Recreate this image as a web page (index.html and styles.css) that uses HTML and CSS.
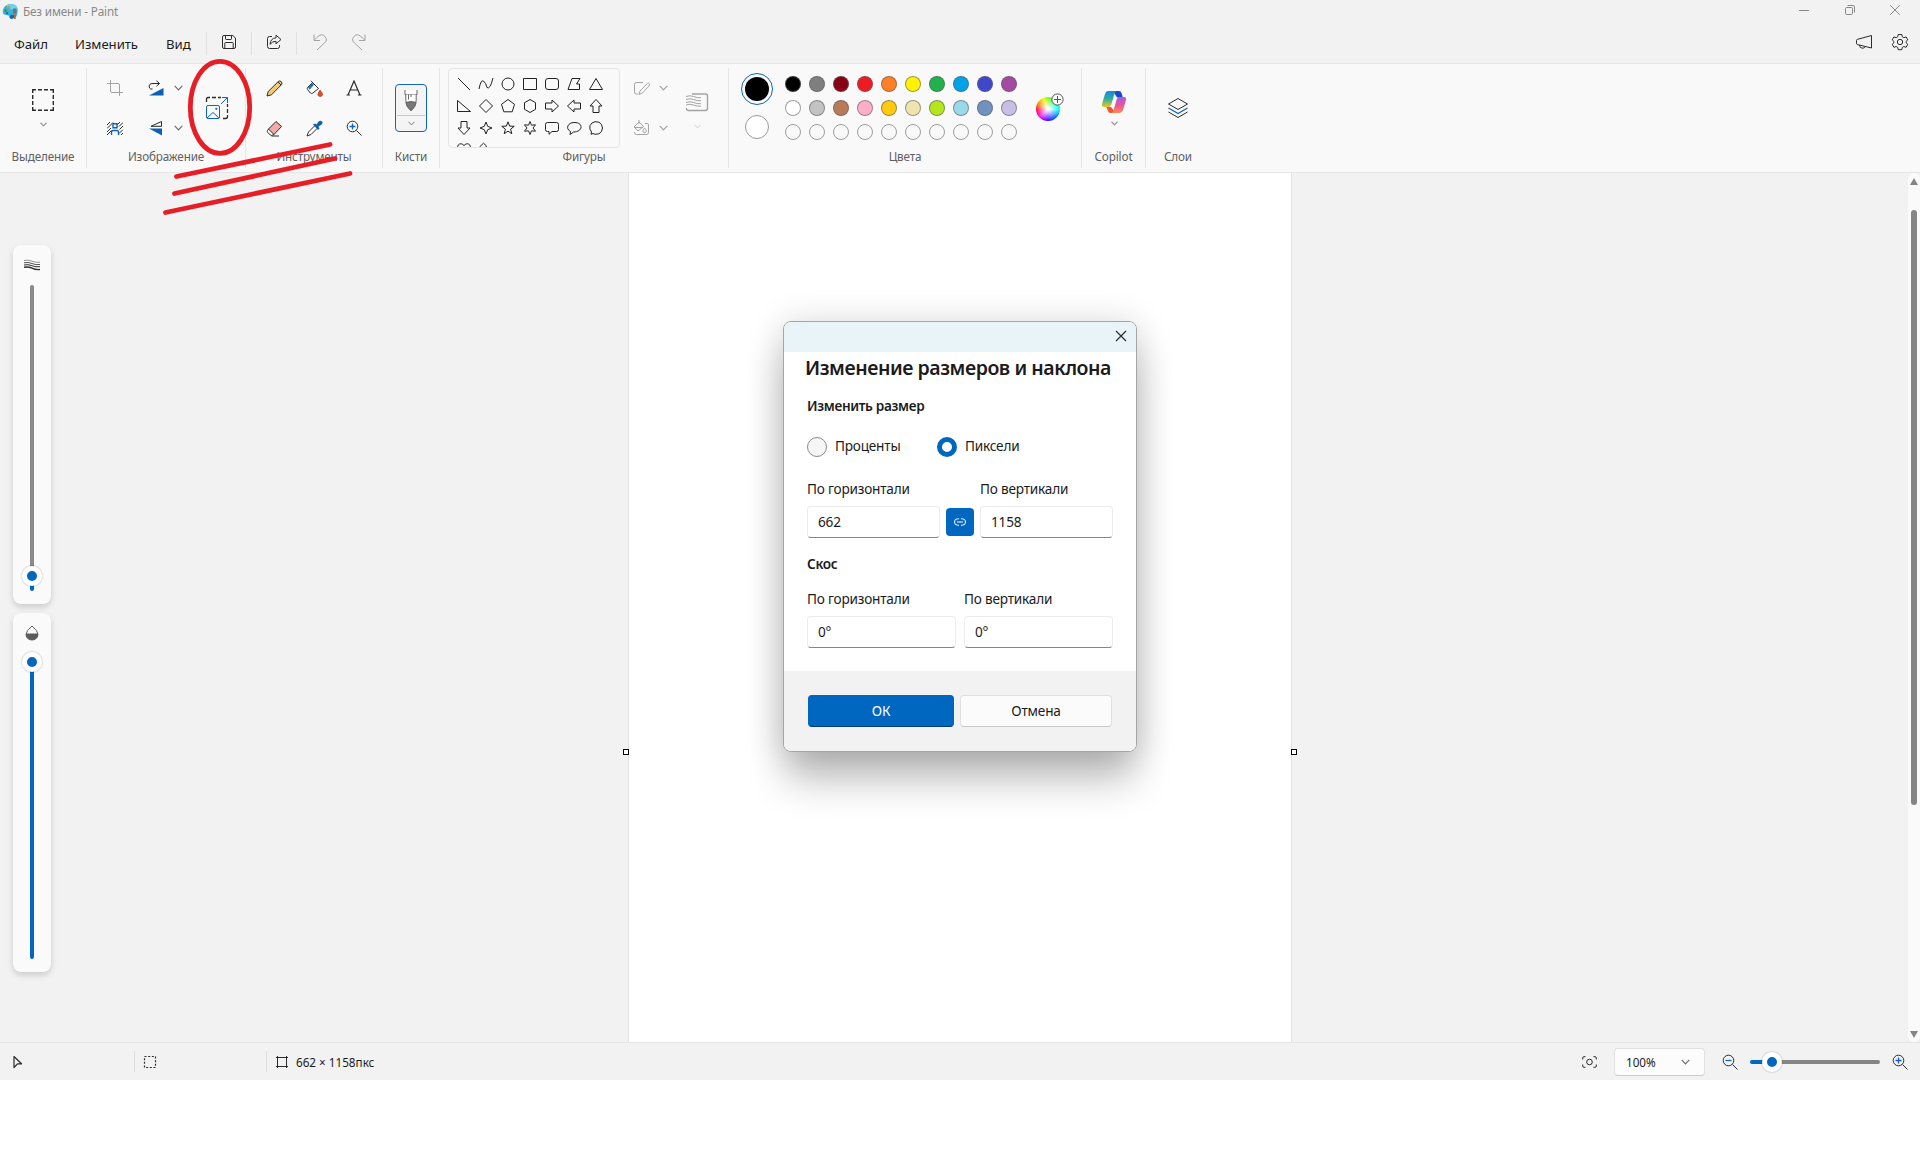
FILE: index.html
```html
<!DOCTYPE html>
<html lang="ru">
  <head>
    <meta charset="utf-8">
    <title>Без имени - Paint</title>
    <link rel="stylesheet" href="styles.css">
  </head>
  <body>
    <div class="app">
      <div class="titlebar">
        <svg class="logo" width="17" height="17" viewBox="0 0 17 17">
          <path d="M8.500 1C13 .8 15.500 3.500 15.800 7L15 12C14 15 11 16 8.500 15.600C7 15.200 7.600 13.500 6.500 12.600C4 11 1 13 .8 9C.6 4.500 4 1.200 8.500 1z" fill="#35b4e0"/>
          <path d="M8.500 1C13 .8 15.500 3.500 15.800 7L9 6.500L4 2.600C5.400 1.600 6.800 1.100 8.500 1z" fill="#6bd3ee"/>
          <path d="M9 11.500L14 12.800C12.500 15 10.500 16 8.500 15.600C7.200 15 7.600 13.500 9 11.500z" fill="#1469b8"/>
          <circle cx="3.600" cy="7.500" r="1.500" fill="#3e9c49"/>
          <circle cx="6.600" cy="4.200" r="1.400" fill="#e8883b"/>
          <circle cx="5" cy="10.200" r="1.200" fill="#1d6cb5"/>
          <path d="M11 5.500h3.500v5H11z" fill="#6d7378"/>
          <path d="M12 10.500h1.700v5.500H12z" fill="#a9743d"/>
        </svg>
        <span class="title">Без имени - Paint</span>
        <div class="window-buttons">
          <svg width="10" height="10"><path d="M0 5.500h10"/></svg>
          <svg width="10" height="10"><rect x=".5" y="2.500" width="7" height="7" rx="1.200"/><path d="M2.500 .5h5.500q1.500 0 1.500 1.500v5.500"/></svg>
          <svg width="10" height="10"><path d="M.2 .2l9.600 9.600M9.800 .2L.2 9.800"/></svg>
        </div>
      </div>

      <div class="menubar">
        <a class="file" href="#">Файл</a>
        <a class="edit" href="#">Изменить</a>
        <a class="view" href="#">Вид</a>
        <div class="quick save">
          <svg width="16" height="16" viewBox="0 0 16 16"><path d="M3 1.500h8.800L14.500 4v9q0 1.500-1.500 1.500H3q-1.500 0-1.500-1.500V3q0-1.500 1.500-1.500zM4.500 1.500v3.300q0 .7.700.7h4.600q.7 0 .7-.7V1.500M3.800 14.500V9.200q0-.7.700-.7h7q.7 0 .7.700v5.300"/></svg>
        </div>
        <div class="quick share">
          <svg width="16" height="16" viewBox="0 0 16 16"><path d="M6 2.500H3.500q-2 0-2 2v8q0 2 2 2h8q2 0 2-2v-1.500M10 1.200l5 4.300l-5 4.300V7.300q-3.500-.2-6 3q.5-6 6-6.500z"/></svg>
        </div>
        <div class="history">
          <svg width="16" height="18" viewBox="0 0 16 18"><path d="M2 1.500v6h6M2.300 7L6 3.500Q10 0 13 3.500T12.500 10L5 17"/></svg>
          <svg width="16" height="18" viewBox="0 0 16 18"><path d="M14 1.500v6H8M13.700 7L10 3.500Q6 0 3 3.500T3.500 10L11 17"/></svg>
        </div>
        <div class="menu-right">
          <svg width="18" height="16" viewBox="0 0 18 16"><path d="M16.500 1.500v12.500L2.300 10.500Q1.500 10.300 1.500 9.500V6.500Q1.500 5.600 2.300 5.400zM4.500 11q.3 3 2.700 3.200T10.300 12.500"/></svg>
          <svg width="18" height="18" viewBox="0 0 18 18"><path d="M7.200 1.500h3.600l.5 2.300 1.500.9 2.300-.8 1.700 3-1.700 1.500v1.400l1.700 1.500-1.700 3-2.300-.8-1.500.9-.5 2.300H7.200l-.5-2.300-1.500-.9-2.300.8-1.700-3 1.700-1.500V8.400L1.200 6.900l1.700-3 2.300.8 1.500-.9z" stroke-linejoin="round"/><circle cx="9" cy="9" r="2.700"/></svg>
        </div>
      </div>

      <div class="ribbon">
        <div class="group selection">
          <div class="tools">
            <svg width="22" height="22" viewBox="0 0 22 22"><path d="M.7 4V.7H4M18 .7h3.300V4M21.300 18v3.300H18M4 21.300H.7V18M6 .7h4M12 .7h4M6 21.300h4M12 21.300h4M.7 6v4M.7 12v4M21.300 6v4M21.300 12v4" stroke-width="1.400"/></svg>
            <svg class="chevron small" width="7" height="5" viewBox="0 0 9 6"><path d="M.7 .8l3.800 4 3.800-4"/></svg>
          </div>
          <span class="label">Выделение</span>
        </div>

        <div class="group image">
          <div class="tools">
            <svg class="off" width="16" height="16" viewBox="0 0 16 16"><path d="M3.500 0v11q0 1.500 1.500 1.500h11M0 3.500h11q1.500 0 1.500 1.500v11"/></svg>
            <svg width="16" height="16" viewBox="0 0 16 16"><path d="M15.500 8v7.500H1z" fill="#0f5fb5" stroke="none"/><path d="M1.500 8Q0 3.500 5 3.500h6.500M8.500 .8l3 2.700-3 2.700M1.500 8q.8 1.500 3 1"/></svg>
            <svg class="chevron" width="9" height="6" viewBox="0 0 9 6"><path d="M.7 .8l3.800 4 3.800-4"/></svg>
            <svg class="resize" width="24" height="24" viewBox="0 0 24 24"><path d="M1.500 6V3q0-1.500 1.500-1.500h2M7 1.500h4M13 1.500h3M22.500 8v3M22.500 13v4M22.500 19v1.500q0 2-2 2H18" stroke-width="1.300"/><path class="blue" d="M3 9.500h10q1.500 0 1.500 1.500v10q0 1.500-1.500 1.500H3q-1.500 0-1.500-1.500V11q0-1.500 1.500-1.500zM2 22l6-5.500 6 5.500M16 8l6.500-6.500M17 1.500h5.500V7"/><circle class="dot" cx="11.300" cy="12.800" r="1.100"/></svg>
            <svg width="16" height="13" viewBox="0 0 16 13"><path d="M0 3l3-3M0 6.500L6 .5M0 10l4-4M0 13L4.500 8.500M10 3l3-3M12 4.500L16 .5M12.500 7.500L16 4M12 11.500l4-4M13 14l3-3"/><path class="blue" d="M6 1.700h4v4H6zM4.500 13v-3q0-1.500 1.500-1.500h4q1.500 0 1.500 1.500v3" stroke-width="1.400"/></svg>
            <svg width="16" height="16" viewBox="0 0 16 16"><path d="M13.500 1.500v4.800H3z"/><path d="M14 8.500v7L1 8.500z" fill="#0f5fb5" stroke="none"/></svg>
            <svg class="chevron" width="9" height="6" viewBox="0 0 9 6"><path d="M.7 .8l3.800 4 3.800-4"/></svg>
          </div>
          <span class="label">Изображение</span>
        </div>

        <div class="group instruments">
          <div class="tools">
            <svg width="17" height="17" viewBox="0 0 17 17"><path d="M1 16l1.200-4.500L12.300 1.500Q14 .3 15.300 1.700T15.500 4.700L5.500 14.800z" fill="#f0cb73"/><path d="M12 2l3 3" /></svg>
            <svg width="17" height="17" viewBox="0 0 17 17"><path d="M6.500 2.500L12.500 8.500L6.500 13.300Q5.500 14 4.500 13L1.500 9.500Q.8 8.500 1.600 7.500z" fill="#fff"/><path d="M2 7.500L6 3l2 1.800-4.500 5z" fill="#1673c8" stroke="none"/><path d="M5 .8l3.500 4"/><path d="M14 10q2.500 3 2.500 4.300a2.300 2.300 0 0 1-4.600 0Q11.900 13 14 10z" fill="#d8512b" stroke="#a33416" stroke-width=".6"/></svg>
            <svg width="16" height="16" viewBox="0 0 16 16"><path d="M2 15L8 1l6 14M4.200 10h7.600M.5 15h3.500M12 15h3.500" stroke-width="1.200"/></svg>
            <svg width="17" height="17" viewBox="0 0 17 17"><path d="M10 1.500L15.500 6.500L8 14.500L2.500 9z" fill="#f6a9a9"/><path d="M2.500 9L1.500 10.500q-.6 1 .3 2l2.500 2.500q1.500 1 2.500 0L8 14.500M5.500 16h7.500" fill="none"/></svg>
            <svg width="17" height="17" viewBox="0 0 17 17"><path d="M8.500 6L2.500 12L1 16l4-1.500L11 8.500" fill="#fff"/><path d="M7 4.500L9 3.500L10.500 4.500L12.500 1.500Q14.500 0 16 1.500T15 5L12.500 6.500L13.500 8.500L12 10z" fill="#0f5fb5" stroke="none"/></svg>
            <svg width="16" height="16" viewBox="0 0 16 16"><circle cx="6.500" cy="6.500" r="5.300"/><path d="M10.500 10.500l5 5"/><path class="blue" d="M6.500 3.500v6M3.500 6.500h6" stroke-width="1.300"/></svg>
          </div>
          <span class="label">Инструменты</span>
        </div>

        <div class="group brushes">
          <div class="tools">
            <div class="brush">
              <svg width="14" height="24" viewBox="0 0 14 24"><path d="M1 1v4.500h12V1" fill="#fff"/><path d="M1.800 5.500v6Q2 17 7 21.500Q12 17 12.200 11.500v-6" fill="#fff"/><path d="M1.800 13.500Q2.500 18 7 21.800Q11.500 18 12.200 13.500Q7 11.500 1.800 13.500z" fill="#777"/><path d="M4.500 5.500v5M7 5.500v2.500"/></svg>
              <div class="drop"><svg class="chevron" width="7" height="5" viewBox="0 0 9 6"><path d="M.7 .8l3.800 4 3.800-4"/></svg></div>
            </div>
          </div>
          <span class="label">Кисти</span>
        </div>

        <div class="group shapes">
          <div class="tools">
            <div class="gallery">
              <svg viewBox="0 0 16 16"><path d="M2 2l12 12"/></svg>
              <svg viewBox="0 0 16 16"><path d="M1 13Q3 3 5.500 5T9 11.500Q12 14 15 2"/></svg>
              <svg viewBox="0 0 16 16"><circle cx="8" cy="8" r="6"/></svg>
              <svg viewBox="0 0 16 16"><path d="M1.500 2.500h13v11h-13z"/></svg>
              <svg viewBox="0 0 16 16"><rect x="1.500" y="2.500" width="13" height="11" rx="2.500"/></svg>
              <svg viewBox="0 0 16 16"><path d="M6 2.500h8L10.500 8h3v5.500H2z"/></svg>
              <svg viewBox="0 0 16 16"><path d="M8 2.500l6.500 11h-13z"/></svg>
              <svg viewBox="0 0 16 16"><path d="M1.500 2.500l13 11h-13z"/></svg>
              <svg viewBox="0 0 16 16"><path d="M8 1.500L14.500 8 8 14.500 1.500 8z"/></svg>
              <svg viewBox="0 0 16 16"><path d="M8 1.500l6.500 4.800-2.300 7.500H3.800L1.500 6.300z"/></svg>
              <svg viewBox="0 0 16 16"><path d="M8 1.500l5.500 3.200v6.600L8 14.500l-5.500-3.200V4.700z"/></svg>
              <svg viewBox="0 0 16 16"><path d="M1.500 5h6.500V2l6.500 6L8 14v-3H1.500z"/></svg>
              <svg viewBox="0 0 16 16"><path d="M14.500 5H8V2L1.500 8 8 14v-3h6.500z"/></svg>
              <svg viewBox="0 0 16 16"><path d="M5 14.500V8H2l6-6.500L14 8h-3v6.500z"/></svg>
              <svg viewBox="0 0 16 16"><path d="M5 1.500V8H2l6 6.500L14 8h-3V1.500z"/></svg>
              <svg viewBox="0 0 16 16"><path d="M8 2l1.700 4.300L14 8 9.700 9.700 8 14 6.300 9.700 2 8l4.300-1.700z"/></svg>
              <svg viewBox="0 0 16 16"><path d="M8 1.800l1.600 4.300 4.600.2-3.600 2.900 1.200 4.500L8 11.200l-3.800 2.500 1.200-4.500L1.800 6.300l4.600-.2z"/></svg>
              <svg viewBox="0 0 16 16"><path d="M8 1.500l1.500 3.700 4-.4L11 8l2.500 3.200-4-.4L8 14.500l-1.500-3.700-4 .4L5 8 2.500 4.800l4 .4z"/></svg>
              <svg viewBox="0 0 16 16"><path d="M3.500 2.500h9q2 0 2 2v5q0 2-2 2H8L5 14.300V11.500H3.500q-2 0-2-2v-5q0-2 2-2z"/></svg>
              <svg viewBox="0 0 16 16"><path d="M4.500 11.500C-1 8.500 2 2.500 8 2.500S15 5 15 7.300 12 12 7.500 12L4 14.500z"/></svg>
              <svg viewBox="0 0 16 16"><path d="M3 14.300l.5-2.300Q1 9 2 5.500L4 3l3-1.300 4 .5 2.500 2.300 1 3.500-1 3.500-2.500 2.300-4 .5-2-.8z"/></svg>
              <svg viewBox="0 0 16 16"><path d="M8 14L2 8C0 2 5 0 8 3.500C11 0 16 2 14 8z"/></svg>
              <svg viewBox="0 0 16 16"><path d="M1.500 5L5.500 1.200 8.500 4 7.500 5.500l5 3v4L2 9z"/></svg>
            </div>
            <div class="shape-options off">
              <svg width="17" height="15" viewBox="0 0 17 15"><path d="M10 1.500H3.500q-2 0-2 2V11q0 2 2 2H5M6 13.500l1-3.500 7.500-7.500q1.300-1 2 .3t-.3 2L9.500 12z"/></svg>
              <svg class="chevron" width="9" height="6" viewBox="0 0 9 6"><path d="M.7 .8l3.800 4 3.800-4"/></svg>
              <svg width="17" height="16" viewBox="0 0 17 16"><path d="M12 3.500h2q1.500 0 1.500 1.500v7.500q0 2-2 2H3.500q-2 0-2-2V12M6 2L1 7l4 4 5.500-4.500zM6 0v4M1.500 7.500h8M11.500 8q1.800 2 1.800 3a1.600 1.600 0 0 1-3.400 0q0-1 1.600-3z"/></svg>
              <svg class="chevron" width="9" height="6" viewBox="0 0 9 6"><path d="M.7 .8l3.800 4 3.800-4"/></svg>
            </div>
            <div class="size off">
              <svg width="24" height="19" viewBox="0 0 24 19"><path d="M7 1h13.500q2 0 2 2v12.500q0 2-2 2H3.500q-2 0-2-2V15" stroke-width="1.400"/><path d="M1 3.500q4-1.500 7.500 0t7.500 1.200M1 6.500q4-1.500 7.500 0t7.500 1.200M1 9.500q4-1.500 7.500 0t7.500 1.200M1 12q4-1.500 7.500 0t7.500 1.200"/></svg>
              <svg class="chevron faint" width="7" height="5" viewBox="0 0 9 6"><path d="M.7 .8l3.800 4 3.800-4"/></svg>
            </div>
          </div>
          <span class="label">Фигуры</span>
        </div>

        <div class="group colors">
          <div class="tools">
            <div class="current">
              <span class="primary"></span>
              <span class="secondary"></span>
            </div>
            <div class="palette">
              <i class="black"></i><i class="gray"></i><i class="dark-red"></i><i class="red"></i><i class="orange"></i><i class="yellow"></i><i class="green"></i><i class="turquoise"></i><i class="indigo"></i><i class="purple"></i>
              <i class="white"></i><i class="light-gray"></i><i class="brown"></i><i class="rose"></i><i class="gold"></i><i class="cream"></i><i class="lime"></i><i class="sky"></i><i class="blue-gray"></i><i class="lavender"></i>
              <i></i><i></i><i></i><i></i><i></i><i></i><i></i><i></i><i></i><i></i>
            </div>
            <div class="wheel"><svg class="plus" width="13" height="13" viewBox="0 0 13 13"><circle cx="6.500" cy="6.500" r="5.600" fill="#fafafa"/><path d="M6.500 3v7M3 6.500h7"/></svg></div>
          </div>
          <span class="label">Цвета</span>
        </div>

        <div class="group copilot">
          <div class="tools">
            <svg width="26" height="24" viewBox="0 0 26 24">
              <defs>
                <linearGradient id="cp1" x1="0" y1="0" x2="0" y2="1"><stop offset="0" stop-color="#1688dd"/><stop offset=".5" stop-color="#2fae9c"/><stop offset="1" stop-color="#f2c522"/></linearGradient>
                <linearGradient id="cp2" x1="0" y1="0" x2="0" y2="1"><stop offset="0" stop-color="#9d5ee8"/><stop offset=".5" stop-color="#e9559b"/><stop offset="1" stop-color="#f98d54"/></linearGradient>
              </defs>
              <path d="M12 1h6q2 0 2.500 2l1.300 4.500H16z" fill="#1b49c4" stroke="none"/>
              <path d="M5 16l5 1 5 6H9.500Q7.500 23 7 21z" fill="#ee5634" stroke="none"/>
              <path d="M7 1h8.500q-1.500.5-2 2.500L10.500 14q-.8 3-3.500 3H3Q.3 17 1 14L4 4Q5 1 7 1z" fill="url(#cp1)" stroke="none"/>
              <path d="M19 23h-8.500q1.500-.5 2-2.500L15.500 10q.8-3 3.500-3h4q2.700 0 2 3l-3 10q-1 3-3 3z" fill="url(#cp2)" stroke="none"/>
            </svg>
            <svg class="chevron small" width="7" height="5" viewBox="0 0 9 6"><path d="M.7 .8l3.800 4 3.800-4"/></svg>
          </div>
          <span class="label">Copilot</span>
        </div>

        <div class="group layers">
          <div class="tools">
            <svg width="22" height="22" viewBox="0 0 22 22"><path d="M11 1.500l9.500 5.500-9.500 5.500L1.500 7zM1.500 15l9.500 5.500 9.500-5.500"/><path class="blue" d="M1.500 11l9.500 5.500 9.500-5.500" stroke-width="1.300"/></svg>
          </div>
          <span class="label">Слои</span>
        </div>
      </div>

      <div class="workspace">
        <div class="sliders">
          <div class="slider">
            <svg width="16" height="12" viewBox="0 0 16 12"><path d="M0 1.500q4-1 8 .7t8 1" stroke-width=".5"/><path d="M0 3.800q4-1 8 .7t8 1" stroke-width=".8"/><path d="M0 6q4-1 8 .7t8 1" stroke-width="1"/><path d="M0 8.300q4-1 8 .9t8 1.300" stroke-width="1.400"/></svg>
            <div class="track size-track"><span class="thumb"></span></div>
          </div>
          <div class="slider">
            <svg width="14" height="16" viewBox="0 0 14 16"><path d="M7 1Q1 6 1 9.500a6 5.500 0 0 0 12 0Q13 6 7 1z" fill="#fff" stroke="#5c5c5c"/><path d="M1 8.500h12v1a6 5.500 0 0 1-12 0z" fill="#5c5c5c" stroke="none"/></svg>
            <div class="track opacity-track"><span class="thumb"></span></div>
          </div>
        </div>
        <div class="canvas">
          <span class="handle left"></span>
          <span class="handle right"></span>
        </div>
        <div class="scrollbar">
          <svg width="8" height="7"><path d="M4 0l4 7H0z"/></svg>
          <span class="bar"></span>
          <svg width="8" height="7"><path d="M4 7l4-7H0z"/></svg>
        </div>
      </div>

      <div class="statusbar">
        <div class="cell pointer"><svg width="12" height="14" viewBox="0 0 12 14"><path d="M2 1.500L9.500 8.800H5.500L2 12.500z" stroke-width="1.200" stroke-linejoin="round"/></svg></div>
        <div class="cell marquee"><svg width="14" height="14" viewBox="0 0 14 14"><rect x="1.500" y="1.500" width="11" height="11" stroke-width="1.200" stroke-dasharray="2 1.670"/></svg></div>
        <div class="cell dimensions">
          <svg width="14" height="14" viewBox="0 0 14 14"><path d="M1 2.500h12M1 11.500h12M2.500 1v12M11.500 1v12"/></svg>
          <span>662 × 1158пкс</span>
        </div>
        <div class="zoom">
          <svg width="15" height="12" viewBox="0 0 15 12"><path d="M3.500 .7H2Q.7 .7 .7 2v1.500M11.500 .7H13q1.300 0 1.300 1.300v1.500M3.500 11.300H2Q.7 11.300 .7 10V8.500M11.500 11.300H13q1.300 0 1.300-1.300V8.500"/><circle cx="7.500" cy="6" r="2.800"/></svg>
          <div class="combo"><span>100%</span><svg class="chevron" width="9" height="6" viewBox="0 0 9 6"><path d="M.7 .8l3.800 4 3.800-4"/></svg></div>
          <svg width="16" height="16" viewBox="0 0 16 16"><circle cx="6.500" cy="6.500" r="5.300"/><path d="M10.500 10.500l5 5"/><path class="blue" d="M3.500 6.500h6" stroke-width="1.300"/></svg>
          <div class="zoom-track"><span class="thumb"></span></div>
          <svg width="16" height="16" viewBox="0 0 16 16"><circle cx="6.500" cy="6.500" r="5.300"/><path d="M10.500 10.500l5 5"/><path class="blue" d="M6.500 3.500v6M3.500 6.500h6" stroke-width="1.300"/></svg>
        </div>
      </div>
    </div>

    <div class="dialog">
      <div class="dialog-bar"><svg width="12" height="12" viewBox="0 0 12 12"><path d="M1 1l10 10M11 1L1 11" stroke-width="1.200"/></svg></div>
      <div class="dialog-body">
        <h1>Изменение размеров и наклона</h1>
        <h2>Изменить размер</h2>
        <div class="radios">
          <label><span class="radio"></span>Проценты</label>
          <label><span class="radio checked"></span>Пиксели</label>
        </div>
        <div class="fields">
          <label>По горизонтали<span class="input">662</span></label>
          <div class="link"><svg width="12" height="8" viewBox="0 0 12 8"><path d="M5 .8H3.500a3 3.200 0 0 0 0 6.400H5M7 .8h1.500a3 3.200 0 0 1 0 6.400H7M3 4h6"/></svg></div>
          <label>По вертикали<span class="input">1158</span></label>
        </div>
        <h2 class="skew">Скос</h2>
        <div class="fields wide">
          <label>По горизонтали<span class="input">0°</span></label>
          <label>По вертикали<span class="input">0°</span></label>
        </div>
      </div>
      <div class="dialog-footer">
        <div class="button ok">ОК</div>
        <div class="button cancel">Отмена</div>
      </div>
    </div>

    <!-- red pen marks on top of everything -->
    <svg class="marks" width="400" height="230">
      <ellipse cx="220" cy="107.300" rx="29.700" ry="46"/>
      <path d="M176.500 176.500L330 144.500M174.500 193.500L335 158.500M165.500 212.500L350 173.500"/>
    </svg>
  </body>
</html>
```

FILE: styles.css
```css
* { box-sizing: border-box; }
body {
  margin: 0;
  background: #fff;
  color: #1b1b1b;
  font-family: "Noto Sans", "Open Sans", sans-serif;
  font-size: 13.6px;
  letter-spacing: -0.2px;
}
svg { display: block; flex: none; fill: none; stroke: #2b2b2b; stroke-width: 1; }
svg .blue { stroke: #0f65bd; }
svg .dot { fill: #0f65bd; stroke: none; }
.off svg, svg.off { stroke: #a3a3a3; }
svg.chevron { stroke: #6e6e6e; stroke-width: 1.200; }
svg.chevron.small { stroke: #999; stroke-width: 1.600; }
.off svg.chevron { stroke: #a3a3a3; }
.off svg.chevron.faint { stroke: #ccc; }

.app { height: 1080px; display: flex; flex-direction: column; background: #f2f2f2; }

.titlebar { height: 24px; display: flex; align-items: center; padding: 0 20px 4px 2px; }
.logo { stroke: none; margin-top: 2px; }
.title { margin-left: 4px; font-size: 11.7px; letter-spacing: -0.13px; color: #888; margin-top: 2px; }
.window-buttons { margin-left: auto; display: flex; gap: 35.500px; }
.window-buttons svg { stroke: #888; }

.menubar { height: 39px; display: flex; align-items: center; font-size: 13.2px; letter-spacing: -0.05px; padding-left: 14px; }
.menubar a { color: #1b1b1b; text-decoration: none; margin-top: 1px; }
.file { width: 61px; }
.edit { width: 91px; }
.view { width: 40px; }
.quick { width: 45px; height: 23px; border-left: 1px solid #e0e0e0; display: flex; align-items: center; justify-content: center; padding-bottom: 2px; margin-bottom: 1px; }
.history { height: 23px; border-left: 1px solid #e0e0e0; display: flex; align-items: center; gap: 23px; padding: 0 0 2px 15px; margin-bottom: 1px; }
.history svg { stroke: #a3a3a3; }
.menu-right { margin-left: auto; display: flex; align-items: center; gap: 18px; padding-right: 11px; margin-bottom: 3px; }

.ribbon { height: 110px; display: flex; background: #f9f9f9; border-top: 1px solid #e5e5e5; border-bottom: 1px solid #e5e5e5; padding: 4px 0; }
.group { display: flex; flex-direction: column; border-right: 1px solid #e5e5e5; }
.group:last-child { border-right: 0; }
.tools { height: 80px; }
.label { height: 18px; line-height: 16px; text-align: center; font-size: 11.7px; letter-spacing: -0.15px; color: #606060; }

.selection { width: 87px; }
.selection .tools { display: flex; flex-direction: column; align-items: center; gap: 11px; padding-top: 21px; }

.image { width: 159px; }
.image .tools { display: grid; grid-template-columns: 50px 22px 22px 56px; grid-template-rows: 40px 40px; align-items: center; justify-items: center; padding-left: 8px; }
.image .tools > :nth-child(1), .image .tools > :nth-child(5) { margin-right: 10px; }
.resize { grid-row: 1 / 3; grid-column: 4; }

.instruments { width: 137px; }
.instruments .tools { display: grid; grid-template-columns: 40px 40px 40px; grid-template-rows: 40px 40px; align-items: center; justify-items: center; padding-left: 8px; }

.brushes { width: 57px; }
.brushes .tools { display: flex; align-items: center; justify-content: center; }
.brush { width: 32px; height: 48px; border: 1px solid #0f65bd; border-radius: 4px; background: #f4f4f4; display: flex; flex-direction: column; align-items: center; padding: 4px 1px 0; }
.brush > svg { stroke: #666; }
.drop { width: 100%; height: 18px; margin-top: 2px; border-top: 1px solid #c8c8c8; display: flex; align-items: center; justify-content: center; }

.shapes { width: 289px; }
.shapes .tools { display: flex; padding-left: 8px; }
.gallery { width: 172px; height: 80px; border: 1px solid #e5e5e5; border-radius: 4px; padding: 4px; display: grid; grid-template-columns: repeat(7, 22px); grid-auto-rows: 22px; align-items: center; justify-items: center; overflow: hidden; }
.gallery svg { width: 16px; height: 16px; stroke: #222; }
.shape-options { display: grid; grid-template-columns: 22px 22px; grid-template-rows: 40px 40px; align-items: center; justify-items: center; margin-left: 10px; }
.size { display: flex; flex-direction: column; align-items: center; gap: 12px; padding-top: 25px; margin-left: 11px; }

.colors { width: 353px; }
.colors .tools { display: flex; align-items: center; padding-left: 8px; }
.current { width: 40px; display: flex; flex-direction: column; align-items: center; gap: 10px; padding-bottom: 4px; }
.primary { width: 32px; height: 32px; border: 1px solid #0f65bd; border-radius: 50%; background: #000 content-box; padding: 3px; }
.secondary { width: 24px; height: 24px; border: 1px solid #999; border-radius: 50%; background: #fff; }
.palette { display: grid; grid-template-columns: repeat(10, 24px); grid-auto-rows: 24px; align-items: center; justify-items: center; margin-left: 4px; }
.palette i { width: 16px; height: 16px; border: 1px solid rgba(96, 96, 96, 0.6); border-radius: 50%; }
.palette .black { background: #000; }
.palette .gray { background: #7f7f7f; }
.palette .dark-red { background: #880015; }
.palette .red { background: #ed1c24; }
.palette .orange { background: #ff7f27; }
.palette .yellow { background: #fff200; }
.palette .green { background: #22b14c; }
.palette .turquoise { background: #00a2e8; }
.palette .indigo { background: #3f48cc; }
.palette .purple { background: #a349a4; }
.palette .white { background: #fff; }
.palette .light-gray { background: #c3c3c3; }
.palette .brown { background: #b97a57; }
.palette .rose { background: #ffaec9; }
.palette .gold { background: #ffc90e; }
.palette .cream { background: #efe4b0; }
.palette .lime { background: #b5e61d; }
.palette .sky { background: #99d9ea; }
.palette .blue-gray { background: #7092be; }
.palette .lavender { background: #c8bfe7; }
.wheel {
  position: relative;
  width: 24px;
  height: 24px;
  margin: 2px 0 0 15px;
  border-radius: 50%;
  background: radial-gradient(circle, #fff 5%, rgba(255, 255, 255, 0) 70%), conic-gradient(#7f0, #0f6 40deg, #0ff 90deg, #06f 135deg, #30f 180deg, #f0f 225deg, #f04 265deg, #f80 300deg, #fe0 335deg, #7f0);
}
.plus { position: absolute; right: -4px; top: -4px; stroke: #555; }

.copilot { width: 64px; }
.copilot .tools { display: flex; flex-direction: column; align-items: center; gap: 7px; padding: 22px 0 0 1px; }
.layers { width: 64px; }
.layers .tools { display: flex; align-items: center; justify-content: center; }

.workspace { height: 869px; display: flex; justify-content: space-between; }
.sliders { width: 628px; padding: 72px 0 0 13px; display: flex; flex-direction: column; gap: 9px; }
.slider { width: 38px; height: 359px; background: #fafafa; border-radius: 8px; box-shadow: 0 3px 6px rgba(0, 0, 0, 0.16); display: flex; flex-direction: column; align-items: center; padding-top: 14px; }
.track { position: relative; width: 4px; height: 306px; border-radius: 2px; }
.size-track { margin-top: 14px; background: linear-gradient(#8a8a8a 290px, #0067c0 290px); }
.opacity-track { height: 306px; margin-top: 12px; background: #0067c0; }
.slider + .slider { padding-top: 11px; }
.slider + .slider svg { margin-top: 1px; }
.thumb { position: absolute; width: 20px; height: 20px; border-radius: 50%; border: 5px solid #fff; background: #0067c0; box-shadow: 0 0 1px 1px rgba(0, 0, 0, 0.1); }
.size-track .thumb { left: -8px; top: 281px; }
.opacity-track .thumb { left: -8px; top: -1px; }

.canvas { position: relative; width: 664px; margin-right: auto; background: #fff; border: solid #e3e3e3; border-width: 0 1px; }
.handle { position: absolute; top: 576px; width: 6px; height: 6px; border: 1px solid #000; background: #fff; }
.handle.left { left: -6px; }
.handle.right { right: -6px; }

.scrollbar { width: 12px; background: #fafafa; border-radius: 6px; display: flex; flex-direction: column; align-items: center; padding: 5px 0 4px; }
.scrollbar svg { fill: #858585; stroke: none; }
.bar { width: 6px; height: 595px; margin: 25px 0 auto; border-radius: 3px; background: #858585; }

.statusbar { height: 38px; border-top: 1px solid #e5e5e5; display: flex; align-items: center; font-size: 11.7px; letter-spacing: 0; }
.cell { height: 21px; border-right: 1px solid #dedede; display: flex; align-items: center; }
.pointer { width: 135px; padding-left: 12px; }
.marquee { width: 132px; padding-left: 8px; }
.dimensions { border: 0; padding-left: 8px; gap: 7px; }
.zoom { margin-left: auto; display: flex; align-items: center; padding-right: 12px; }
.combo { width: 91px; height: 28px; margin: 0 17px; border: 1px solid #e0e0e0; border-bottom-color: #ccc; border-radius: 4px; background: #fcfcfc; display: flex; align-items: center; justify-content: space-between; padding: 0 14px 0 11px; }
.zoom-track { position: relative; width: 130px; height: 4px; margin: 0 12px 0 12px; border-radius: 2px; background: linear-gradient(to right, #0067c0 20px, #858585 20px); }
.zoom-track .thumb { left: 12px; top: -8px; }

.dialog {
  position: absolute;
  left: 783px;
  top: 321px;
  width: 354px;
  height: 431px;
  border: 1px solid #a5a5a5;
  border-radius: 8px;
  background: #fff;
  box-shadow: 0 32px 40px -4px rgba(0, 0, 0, 0.24), 0 4px 36px rgba(0, 0, 0, 0.18);
  display: flex;
  flex-direction: column;
  overflow: hidden;
}
.dialog-bar { height: 30px; background: #e9f4f8; display: flex; align-items: center; justify-content: flex-end; padding: 0 9px 2px 0; }
.dialog-body { height: 319px; padding: 3px 23px 0; }
h1 { margin: 0 -6px 0 -2px; font-size: 19.500px; font-weight: 600; letter-spacing: -0.45px; line-height: 26px; white-space: nowrap; }
h2 { margin: 15px 0 0; font-size: 13.6px; font-weight: 600; letter-spacing: -0.34px; line-height: 20px; }
.radios { display: flex; margin-top: 21px; }
.radios label { width: 130px; height: 20px; line-height: 18px; display: flex; gap: 8px; }
.radio { width: 20px; height: 20px; border: 1px solid #8a8a8a; border-radius: 50%; background: #f6f6f6; }
.radio.checked { border: 5px solid #0067c0; background: #fff; }
.fields { display: flex; justify-content: space-between; align-items: flex-end; margin-top: 22px; }
.fields label { width: 133px; line-height: 20px; }
.fields.wide { margin-top: 15px; }
.fields.wide label { width: 149px; }
.input { display: flex; align-items: center; height: 32px; margin-top: 7px; padding-left: 10px; border: 1px solid #ececec; border-bottom-color: #868686; border-radius: 4px; }
.link { width: 28px; height: 28px; margin-bottom: 2px; border-radius: 4px; background: #0067c0; display: flex; align-items: center; justify-content: center; }
.link svg { stroke: #fff; }
.skew { margin-top: 16px; }
.dialog-footer { flex: 1; background: #f2f2f2; display: flex; gap: 6px; padding: 24px 24px 0; }
.button { width: 152px; height: 32px; padding-bottom: 2px; border: 1px solid #e0e0e0; border-bottom-color: #c8c8c8; border-radius: 4px; background: #fbfbfb; display: flex; align-items: center; justify-content: center; }
.ok { width: 146px; background: #0067c0; border-color: #0067c0; border-bottom-color: #003e73; color: #fff; }

.marks { position: absolute; left: 0; top: 0; stroke: #e61e26; stroke-width: 4.800; stroke-linecap: round; pointer-events: none; }
```
